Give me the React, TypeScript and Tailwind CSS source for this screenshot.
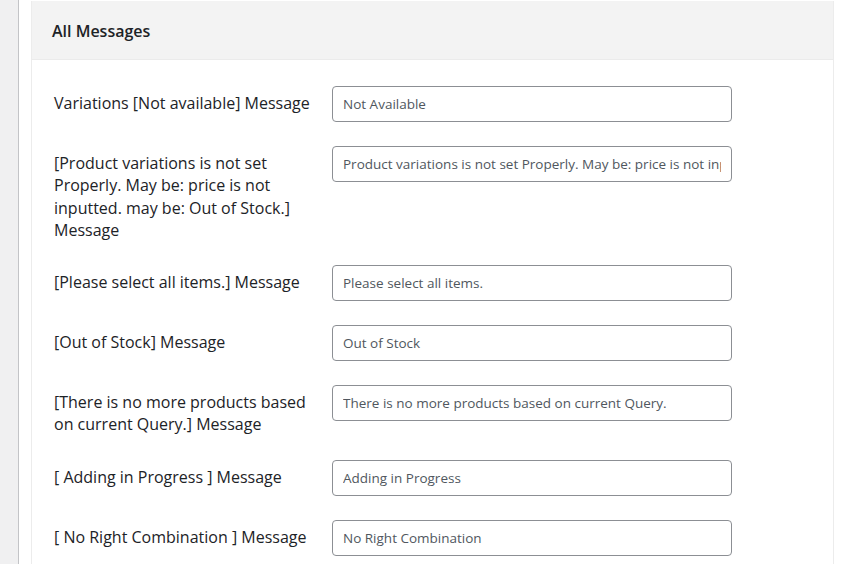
import React from 'react';

const rows = [
  { label: 'Variations [Not available] Message', value: 'Not Available' },
  {
    label: '[Product variations is not set Properly. May be: price is not inputted. may be: Out of Stock.] Message',
    value: 'Product variations is not set Properly. May be: price is not inputted. may be: Out of Stock.',
  },
  { label: '[Please select all items.] Message', value: 'Please select all items.' },
  { label: '[Out of Stock] Message', value: 'Out of Stock' },
  { label: '[There is no more products based on current Query.] Message', value: 'There is no more products based on current Query.' },
  { label: '[ Adding in Progress ] Message', value: 'Adding in Progress' },
  { label: '[ No Right Combination ] Message', value: 'No Right Combination' },
];

export default function App() {
  return (
    <div
      className="flex w-[856px] h-[564px] overflow-hidden bg-white text-[#1d2327]"
      style={{ fontFamily: '"Open Sans", "Noto Sans", sans-serif' }}
    >
      {/* admin sidebar edge */}
      <div className="w-[18px] shrink-0 bg-[#f0f0f1]" />
      <div className="w-px shrink-0 bg-[#c3c4c7]" />
      <div className="w-[12px] shrink-0 bg-white" />

      {/* settings panel */}
      <div className="w-[803px] shrink-0 mt-px border-x border-[#ececec] bg-white">
        <div className="h-[59px] flex items-center pt-[2px] px-5 bg-[#f3f3f3] border-b border-[#ebebeb]">
          <h2 className="text-[16px] font-semibold">All Messages</h2>
        </div>

        <div className="pt-[14px] pl-[22px]">
          {rows.map((row) => (
            <div key={row.label} className="flex items-start">
              <div className="w-[278px] shrink-0 pt-[18px] pb-[12px] pr-[14px] text-[16px] leading-[22.25px]">
                {row.label}
              </div>
              <div className="py-3">
                <input
                  readOnly
                  value={row.value}
                  className="w-[400px] h-[36px] px-[10px] rounded-[4px] border border-[#8c8f94] bg-white text-[13.5px] text-[#50575e] outline-none"
                  style={{ fontFamily: '"Open Sans", "Noto Sans", sans-serif' }}
                />
              </div>
            </div>
          ))}
        </div>
      </div>
    </div>
  );
}
